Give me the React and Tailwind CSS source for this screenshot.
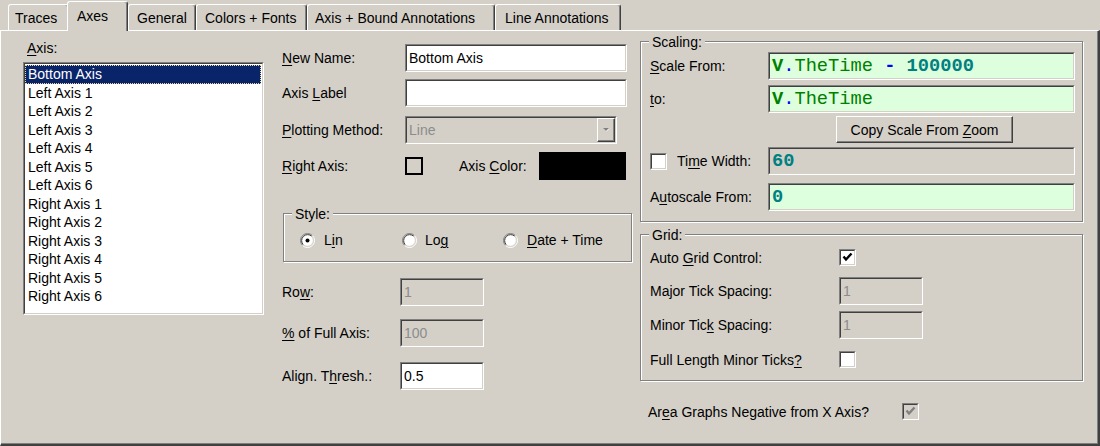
import React from "react";

const U = ({ children }) => <span className="underline underline-offset-[2px] decoration-1">{children}</span>;

function Sunken({ className = "", bg = "bg-white", inner = "flex items-center", children }) {
  return (
    <div className={`shrink-0 border border-t-[#808080] border-l-[#808080] border-b-white border-r-white ${className}`}>
      <div className={`h-full w-full border border-t-[#404040] border-l-[#404040] border-b-[#d4d0c8] border-r-[#d4d0c8] ${bg} ${inner}`}>
        {children}
      </div>
    </div>
  );
}

function Check({ checked = false, disabled = false }) {
  return (
    <div className="w-[17px] h-[17px] shrink-0 border border-t-[#808080] border-l-[#808080] border-b-white border-r-white">
      <div className={`w-full h-full border border-t-[#404040] border-l-[#404040] border-b-[#d4d0c8] border-r-[#d4d0c8] ${disabled ? "bg-[#d4d0c8]" : "bg-white"} flex items-center justify-center`}>
        {checked && (
          <svg width="13" height="13" viewBox="0 0 13 13">
            <polyline points="2.5,5.5 5,8.5 10.5,2.5" fill="none" stroke={disabled ? "#808080" : "#000"} strokeWidth="2.4" />
          </svg>
        )}
      </div>
    </div>
  );
}

function Radio({ checked = false }) {
  return (
    <svg width="15" height="15" viewBox="0 0 15 15" className="shrink-0">
      <circle cx="7.5" cy="7.5" r="6" fill="#fff" />
      <path d="M2.55 12.45 A7 7 0 0 1 12.45 2.55" fill="none" stroke="#808080" strokeWidth="1" />
      <path d="M12.45 2.55 A7 7 0 0 1 2.55 12.45" fill="none" stroke="#ffffff" strokeWidth="1" />
      <path d="M3.26 11.74 A6 6 0 0 1 11.74 3.26" fill="none" stroke="#404040" strokeWidth="1" />
      <path d="M11.74 3.26 A6 6 0 0 1 3.26 11.74" fill="none" stroke="#d4d0c8" strokeWidth="1" />
      {checked && <circle cx="7.5" cy="7.5" r="2" fill="#000" />}
    </svg>
  );
}

function Group({ label, className = "", children }) {
  return (
    <div className={`relative border border-[#808080] shadow-[inset_1px_1px_0_#fff,1px_1px_0_#fff] ${className}`}>
      <span className="absolute left-[8px] top-[-8px] px-[3px] bg-[#d4d0c8] leading-[16px]">{label}</span>
      {children}
    </div>
  );
}

const mono = "font-['Liberation_Mono','Courier_New',monospace] text-[18.7px] leading-none whitespace-pre pl-[2px]";

const tabBase =
  "h-[26px] shrink-0 border-t border-l border-t-white border-l-white border-r border-r-[#404040] shadow-[inset_-1px_0_0_#808080] rounded-tl-[3px] rounded-tr-[3px] pt-[5px] leading-[16px] whitespace-nowrap";

export default function App() {
  const items = [
    "Bottom Axis",
    "Left Axis 1",
    "Left Axis 2",
    "Left Axis 3",
    "Left Axis 4",
    "Left Axis 5",
    "Left Axis 6",
    "Right Axis 1",
    "Right Axis 2",
    "Right Axis 3",
    "Right Axis 4",
    "Right Axis 5",
    "Right Axis 6",
  ];
  return (
    <div className="w-[1100px] h-[446px] overflow-hidden bg-[#d4d0c8] text-black text-[14px] leading-[16px] font-['Liberation_Sans',Arial,sans-serif]">
      {/* Tabs */}
      <div className="h-[30px] flex items-end pl-[8px]">
        <div className={`${tabBase} w-[61px] pl-[6px]`}>Traces</div>
        <div className="relative z-10 -ml-[2px] -mb-[1px] h-[30px] w-[61px] shrink-0 bg-[#d4d0c8] border-t border-l border-t-white border-l-white border-r border-r-[#404040] shadow-[inset_-1px_0_0_#808080] rounded-tl-[3px] rounded-tr-[3px] pt-[6px] pl-[9px] leading-[16px]">
          Axes
        </div>
        <div className={`${tabBase} w-[68px] pl-[8px]`}>General</div>
        <div className={`${tabBase} w-[111px] pl-[8px]`}>Colors + Fonts</div>
        <div className={`${tabBase} w-[188px] pl-[7px]`}>Axis + Bound Annotations</div>
        <div className={`${tabBase} w-[126px] pl-[9px]`}>Line Annotations</div>
      </div>

      {/* Panel */}
      <div className="h-[416px] flex items-start border-t border-l border-t-white border-l-white border-r-2 border-b-2 border-r-[#404040] border-b-[#404040] shadow-[inset_-1px_-1px_0_#808080]">
        {/* Left column */}
        <div className="ml-[22px] w-[241px] pt-[9px] flex flex-col">
          <div className="pl-[4px] leading-[16px]">
            <U>A</U>xis:
          </div>
          <Sunken className="mt-[6px] h-[253px] w-[241px]" inner="flex flex-col pt-[1px] pr-[1px]">
            {items.map((it, i) => (
              <div
                key={it}
                className={`h-[18.5px] leading-[18px] pl-[3px] whitespace-nowrap ${
                  i === 0
                    ? "bg-[#0a246a] text-white outline-1 outline-dotted outline-[#e8dc98] -outline-offset-1"
                    : ""
                }`}
              >
                {it}
              </div>
            ))}
          </Sunken>
        </div>

        {/* Middle column */}
        <div className="ml-[18px] w-[350px] pt-[13px] flex flex-col">
          <div className="h-[28px] flex items-center">
            <div className="w-[123px]">
              <U>N</U>ew Name:
            </div>
            <Sunken className="w-[222px] h-[28px]">
              <span className="pl-[2px]">Bottom Axis</span>
            </Sunken>
          </div>
          <div className="mt-[7px] h-[28px] flex items-center">
            <div className="w-[123px]">
              Axis <U>L</U>abel
            </div>
            <Sunken className="w-[222px] h-[28px]" />
          </div>
          <div className="mt-[9px] h-[28px] flex items-center">
            <div className="w-[123px]">
              <U>P</U>lotting Method:
            </div>
            <Sunken className="w-[212px] h-[28px]" bg="bg-[#d4d0c8]">
              <span className="pl-[2px] flex-1 text-[#8c8c8c]">Line</span>
              <div className="w-[18px] h-[24px] shrink-0 border border-t-white border-l-white border-b-[#404040] border-r-[#404040] shadow-[inset_-1px_-1px_0_#808080] bg-[#d4d0c8] flex items-center justify-center">
                <svg width="9" height="6" viewBox="0 0 9 6">
                  <path d="M1.5 1.5h6l-3 3z" fill="#fff" />
                  <path d="M1 1h6l-3 3z" fill="#808080" />
                </svg>
              </div>
            </Sunken>
          </div>
          <div className="mt-[8px] h-[28px] flex items-center">
            <div className="w-[123px]">
              <U>R</U>ight Axis:
            </div>
            <div className="w-[18px] h-[18px] shrink-0 border-2 border-black" />
            <div className="ml-[36px] w-[80px]">
              Axis <U>C</U>olor:
            </div>
            <div className="w-[87px] h-[28px] bg-black" />
          </div>

          <Group label="Style:" className="mt-[33px] ml-[1px] w-[349px] h-[49px]">
            <div className="pt-[18px] pl-[16px] flex items-center">
              <div className="w-[102px] flex items-center">
                <Radio checked />
                <span className="ml-[9px]">
                  L<U>i</U>n
                </span>
              </div>
              <div className="w-[101px] flex items-center">
                <Radio />
                <span className="ml-[8px]">
                  Lo<U>g</U>
                </span>
              </div>
              <div className="flex items-center">
                <Radio />
                <span className="ml-[9px]">
                  <U>D</U>ate + Time
                </span>
              </div>
            </div>
          </Group>

          <div className="mt-[16px] h-[28px] flex items-center">
            <div className="w-[118px]">
              Ro<U>w</U>:
            </div>
            <Sunken className="w-[84px] h-[28px]" bg="bg-[#d4d0c8]">
              <span className="pl-[2px] text-[#8c8c8c]">1</span>
            </Sunken>
          </div>
          <div className="mt-[13px] h-[28px] flex items-center">
            <div className="w-[118px]">
              <U>%</U> of Full Axis:
            </div>
            <Sunken className="w-[84px] h-[28px]" bg="bg-[#d4d0c8]">
              <span className="pl-[2px] text-[#8c8c8c]">100</span>
            </Sunken>
          </div>
          <div className="mt-[15px] h-[28px] flex items-center">
            <div className="w-[118px]">
              Align. T<U>h</U>resh.:
            </div>
            <Sunken className="w-[84px] h-[28px]">
              <span className="pl-[2px]">0.5</span>
            </Sunken>
          </div>
        </div>

        {/* Right column */}
        <div className="ml-[8px] w-[443px] pt-[10px] flex flex-col">
          <Group label="Scaling:" className="w-[443px]">
            <div className="pt-[10px] pb-[10px] pl-[9px] flex flex-col">
              <div className="h-[28px] flex items-center">
                <div className="w-[118px]">
                  <U>S</U>cale From:
                </div>
                <Sunken className="w-[307px] h-[28px]" bg="bg-[#ddffdd]">
                  <span className={mono}>
                    <b className="text-[#008000]">V</b>
                    <span className="text-[#0000ff]">.</span>
                    <span className="text-[#008000]">TheTime</span> <b className="text-[#0000ff]">-</b>{" "}
                    <b className="text-[#008080]">100000</b>
                  </span>
                </Sunken>
              </div>
              <div className="mt-[5px] h-[28px] flex items-center">
                <div className="w-[118px]">
                  <U>t</U>o:
                </div>
                <Sunken className="w-[307px] h-[28px]" bg="bg-[#ddffdd]">
                  <span className={mono}>
                    <b className="text-[#008000]">V</b>
                    <span className="text-[#0000ff]">.</span>
                    <span className="text-[#008000]">TheTime</span>
                  </span>
                </Sunken>
              </div>
              <div className="mt-[3px] h-[27px] flex pl-[186px]">
                <div className="w-[177px] h-[27px] border border-t-white border-l-white border-b-[#404040] border-r-[#404040] shadow-[inset_-1px_-1px_0_#808080] flex items-center justify-center">
                  <span className="whitespace-pre">
                    Copy Scale From <U>Z</U>oom
                  </span>
                </div>
              </div>
              <div className="mt-[4px] h-[28px] flex items-center">
                <div className="w-[118px] flex items-center">
                  <Check />
                  <span className="ml-[10px]">
                    Ti<U>m</U>e Width:
                  </span>
                </div>
                <Sunken className="w-[307px] h-[28px]" bg="bg-[#d4d0c8]">
                  <span className={mono}>
                    <b className="text-[#008080]">60</b>
                  </span>
                </Sunken>
              </div>
              <div className="mt-[8px] h-[28px] flex items-center">
                <div className="w-[118px]">
                  A<U>u</U>toscale From:
                </div>
                <Sunken className="w-[307px] h-[28px]" bg="bg-[#ddffdd]">
                  <span className={mono}>
                    <b className="text-[#008080]">0</b>
                  </span>
                </Sunken>
              </div>
            </div>
          </Group>

          <Group label="Grid:" className="mt-[12px] w-[443px]">
            <div className="pt-[14px] pb-[12px] pl-[9px] flex flex-col">
              <div className="h-[17px] flex items-center">
                <div className="w-[189px]">
                  Auto <U>G</U>rid Control:
                </div>
                <Check checked />
              </div>
              <div className="mt-[11px] h-[28px] flex items-center">
                <div className="w-[189px]">Major Tick Spacing:</div>
                <Sunken className="w-[84px] h-[28px]" bg="bg-[#d4d0c8]">
                  <span className="pl-[2px] text-[#8c8c8c]">1</span>
                </Sunken>
              </div>
              <div className="mt-[6px] h-[28px] flex items-center">
                <div className="w-[189px]">
                  Minor Tic<U>k</U> Spacing:
                </div>
                <Sunken className="w-[84px] h-[28px]" bg="bg-[#d4d0c8]">
                  <span className="pl-[2px] text-[#8c8c8c]">1</span>
                </Sunken>
              </div>
              <div className="mt-[12px] h-[17px] flex items-center">
                <div className="w-[189px]">
                  Full Length Minor Ticks<U>?</U>
                </div>
                <Check />
              </div>
            </div>
          </Group>

          <div className="mt-[22px] h-[17px] pl-[8px] flex items-center">
            <div className="w-[254px]">
              Ar<U>e</U>a Graphs Negative from X Axis?
            </div>
            <Check checked disabled />
          </div>
        </div>
      </div>
    </div>
  );
}
